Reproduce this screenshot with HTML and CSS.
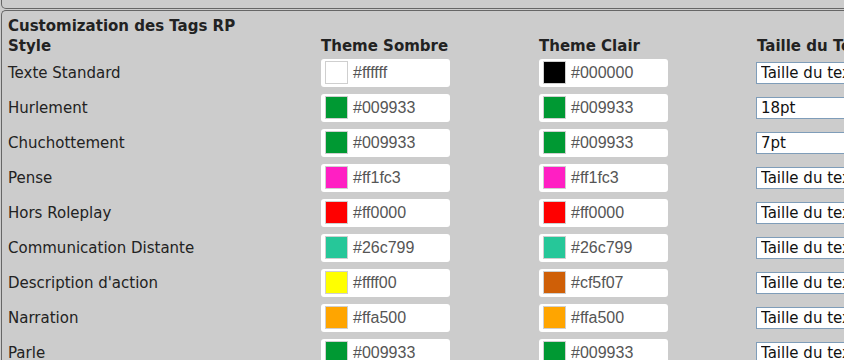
FILE: index.html
```html
<!DOCTYPE html>
<html lang="fr">
<head>
  <meta charset="UTF-8">
  <meta name="viewport" content="width=device-width, initial-scale=1.0">
  <title>Customization des Tags RP</title>
  <link rel="stylesheet" href="styles.css">
</head>
<body>
  <div class="top-panel"></div>

  <div class="panel">
    <div class="panel-title">Customization des Tags RP</div>

    <div class="tags-grid">
      <div class="head">Style</div>
      <div class="head">Theme Sombre</div>
      <div class="head">Theme Clair</div>
      <div class="head">Taille du Texte</div>

      <!-- Texte Standard -->
      <div class="label">Texte Standard</div>
      <div class="color-field"><span class="swatch" style="background:#ffffff"></span><span class="hex">#ffffff</span></div>
      <div class="color-field"><span class="swatch" style="background:#000000"></span><span class="hex">#000000</span></div>
      <div><select class="size-select"><option>Taille du texte</option></select></div>

      <div class="label">Hurlement</div>
      <div class="color-field"><span class="swatch" style="background:#009933"></span><span class="hex">#009933</span></div>
      <div class="color-field"><span class="swatch" style="background:#009933"></span><span class="hex">#009933</span></div>
      <div><select class="size-select"><option>18pt</option></select></div>

      <div class="label">Chuchottement</div>
      <div class="color-field"><span class="swatch" style="background:#009933"></span><span class="hex">#009933</span></div>
      <div class="color-field"><span class="swatch" style="background:#009933"></span><span class="hex">#009933</span></div>
      <div><select class="size-select"><option>7pt</option></select></div>

      <div class="label">Pense</div>
      <div class="color-field"><span class="swatch" style="background:#ff1fc3"></span><span class="hex">#ff1fc3</span></div>
      <div class="color-field"><span class="swatch" style="background:#ff1fc3"></span><span class="hex">#ff1fc3</span></div>
      <div><select class="size-select"><option>Taille du texte</option></select></div>

      <div class="label">Hors Roleplay</div>
      <div class="color-field"><span class="swatch" style="background:#ff0000"></span><span class="hex">#ff0000</span></div>
      <div class="color-field"><span class="swatch" style="background:#ff0000"></span><span class="hex">#ff0000</span></div>
      <div><select class="size-select"><option>Taille du texte</option></select></div>

      <div class="label">Communication Distante</div>
      <div class="color-field"><span class="swatch" style="background:#26c799"></span><span class="hex">#26c799</span></div>
      <div class="color-field"><span class="swatch" style="background:#26c799"></span><span class="hex">#26c799</span></div>
      <div><select class="size-select"><option>Taille du texte</option></select></div>

      <div class="label">Description d'action</div>
      <div class="color-field"><span class="swatch" style="background:#ffff00"></span><span class="hex">#ffff00</span></div>
      <div class="color-field"><span class="swatch" style="background:#cf5f07"></span><span class="hex">#cf5f07</span></div>
      <div><select class="size-select"><option>Taille du texte</option></select></div>

      <div class="label">Narration</div>
      <div class="color-field"><span class="swatch" style="background:#ffa500"></span><span class="hex">#ffa500</span></div>
      <div class="color-field"><span class="swatch" style="background:#ffa500"></span><span class="hex">#ffa500</span></div>
      <div><select class="size-select"><option>Taille du texte</option></select></div>

      <div class="label">Parle</div>
      <div class="color-field"><span class="swatch" style="background:#009933"></span><span class="hex">#009933</span></div>
      <div class="color-field"><span class="swatch" style="background:#009933"></span><span class="hex">#009933</span></div>
      <div><select class="size-select"><option>Taille du texte</option></select></div>
    </div>
  </div>
</body>
</html>
```

FILE: styles.css
```css
html, body {
  overflow: hidden;
}

body {
  margin: 0;
  padding: 0;
  background-color: #cccccc;
  font-family: 'DejaVu Sans', Verdana, sans-serif;
  font-size: 15px;
  color: #222;
}

/* panneau du dessus, on ne voit que son bord inferieur */
.top-panel {
  width: 1200px;
  height: 9px;
  margin-left: 1px;
  border: 1px solid #666;
  border-top: none;
  border-radius: 0 0 0 5px;
  box-sizing: border-box;
}

.panel {
  width: 1200px;
  height: 400px;
  margin-top: 1px;
  margin-left: 1px;
  border: 1px solid #666;
  border-right: none;
  border-bottom: none;
  border-radius: 5px 0 0 0;
  padding: 5px 0 0 6px;
}

.panel-title {
  font-weight: bold;
  line-height: 20px;
}

.tags-grid {
  display: grid;
  grid-template-columns: 313px 218px 218px 300px;
  grid-template-rows: 19px;
  grid-auto-rows: 35px;
  align-items: center;
}

.head {
  font-weight: bold;
  line-height: 20px;
  align-self: start;
}

.label {
  line-height: 20px;
}

.color-field {
  display: flex;
  align-items: center;
  gap: 5px;
  width: 129px;
  height: 28px;
  padding-left: 4px;
  box-sizing: border-box;
  background-color: #fff;
  border-radius: 3px;
}

.swatch {
  width: 23px;
  height: 23px;
  box-sizing: border-box;
  border: 1px solid #cfcfcf;
}

.hex {
  font-family: 'Liberation Sans', Arial, sans-serif;
  font-size: 16px;
  color: #555;
}

.size-select {
  -webkit-appearance: none;
  appearance: none;
  display: block;
  margin-left: -1px;
  width: 160px;
  height: 22px;
  padding: 0 4px;
  border: 1px solid #7f9db9;
  border-radius: 0;
  background-color: #fff;
  font-family: 'DejaVu Sans', Verdana, sans-serif;
  font-size: 15px;
  color: #111;
}
```
